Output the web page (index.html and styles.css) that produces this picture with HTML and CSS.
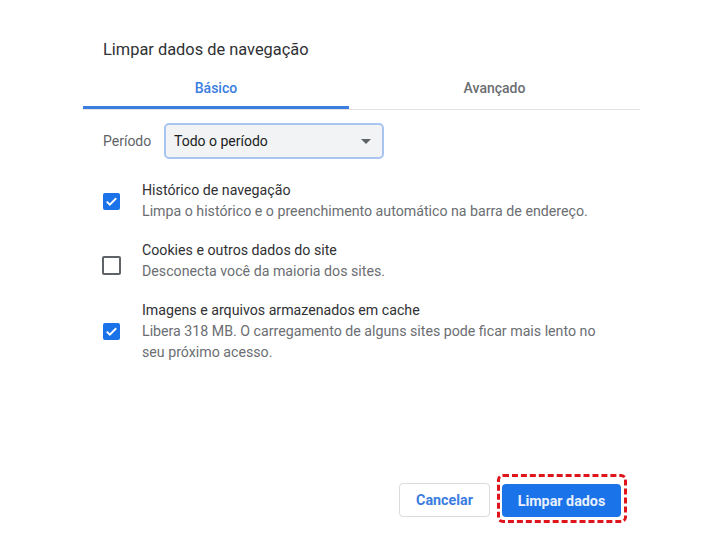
FILE: index.html
```html
<!DOCTYPE html>
<html lang="pt">
<head>
    <meta charset="UTF-8">
    <meta name="viewport" content="width=device-width, initial-scale=1.0">
    <title>Limpar dados de navegação</title>
    <link rel="stylesheet" href="styles.css">
</head>
<body>
    <div class="dialog">
        <h1 class="dialog-title">Limpar dados de navegação</h1>

        <div class="tabs">
            <div class="tab active">Básico</div>
            <div class="tab tab-wide">Avançado</div>
        </div>

        <div class="period-row">
            <span class="period-label">Período</span>
            <div class="select">
                <span>Todo o período</span>
                <span class="select-arrow"></span>
            </div>
        </div>

        <div class="items">
            <div class="item">
                <div class="check-col"><span class="checkbox checked">
                    <svg viewBox="0 0 18 18" width="17" height="17"><path d="M4 9.2l3.2 3.2L14 5.6" fill="none" stroke="#fff" stroke-width="2"/></svg>
                </span></div>
                <div class="item-text">
                    <div class="item-title">Histórico de navegação</div>
                    <div class="item-desc">Limpa o histórico e o preenchimento automático na barra de endereço.</div>
                </div>
            </div>

            <div class="item">
                <div class="check-col"><span class="checkbox unchecked"></span></div>
                <div class="item-text">
                    <div class="item-title">Cookies e outros dados do site</div>
                    <div class="item-desc">Desconecta você da maioria dos sites.</div>
                </div>
            </div>

            <div class="item">
                <div class="check-col"><span class="checkbox checked">
                    <svg viewBox="0 0 18 18" width="17" height="17"><path d="M4 9.2l3.2 3.2L14 5.6" fill="none" stroke="#fff" stroke-width="2"/></svg>
                </span></div>
                <div class="item-text">
                    <div class="item-title">Imagens e arquivos armazenados em cache</div>
                    <div class="item-desc">Libera 318 MB. O carregamento de alguns sites pode ficar mais lento no<br>seu próximo acesso.</div>
                </div>
            </div>
        </div>

        <div class="footer">
            <button class="btn btn-cancel">Cancelar</button>
            <span class="highlight">
                <button class="btn btn-primary">Limpar dados</button>
            </span>
        </div>
    </div>
</body>
</html>
```

FILE: styles.css
```css
* {
    margin: 0;
    padding: 0;
    box-sizing: border-box;
}

body {
    font-family: Roboto, 'Liberation Sans', sans-serif;
    background: #fff;
    color: #202124;
    width: 710px;
    height: 553px;
    overflow: hidden;
}

.dialog {
    margin-left: 83px;
    width: 557px;
    padding-top: 40px;
}

.dialog-title {
    font-size: 16.4px;
    font-weight: 400;
    line-height: 20px;
    color: #303134;
    padding-left: 20px;
}

.tabs {
    display: flex;
    margin-top: 9px;
    border-bottom: 1px solid #e3e3e3;
}

.tab {
    width: 266px;
    text-align: center;
    font-size: 14px;
    font-weight: 500;
    line-height: 20px;
    padding: 9px 0 8px;
    color: #6b6e72;
    border-bottom: 3px solid transparent;
}

.tab-wide {
    width: 291px;
}

.tab.active {
    color: #3b7de0;
    border-bottom-color: #3b7de0;
}

.period-row {
    display: flex;
    align-items: center;
    margin-top: 13px;
    padding-left: 20px;
}

.period-label {
    font-size: 14px;
    color: #5f6368;
    width: 61px;
}

.select {
    width: 220px;
    height: 36px;
    display: flex;
    align-items: center;
    justify-content: space-between;
    padding: 0 11px 0 8px;
    background: #f1f3f4;
    border: 2px solid #a8c4f0;
    border-radius: 5px;
    font-size: 14px;
    color: #202124;
}

.select-arrow {
    width: 0;
    height: 0;
    border-left: 5px solid transparent;
    border-right: 5px solid transparent;
    border-top: 5px solid #5f6368;
}

.items {
    display: flex;
    flex-direction: column;
    gap: 18px;
    margin-top: 21px;
    padding-left: 20px;
}

.item {
    display: flex;
    align-items: center;
}

.check-col {
    width: 39px;
    display: flex;
}

.checkbox {
    width: 17px;
    height: 17px;
    border-radius: 2px;
    display: flex;
    align-items: center;
    justify-content: center;
}

.checkbox.checked {
    background: #1a73e8;
}

.checkbox.unchecked {
    width: 19px;
    height: 19px;
    border: 2.5px solid #5f6368;
    margin-top: 8px;
    margin-left: -1px;
}

.item-text {
    font-size: 14.2px;
    line-height: 21px;
}

.item-title {
    color: #303134;
}

.item-desc {
    color: #6b6e72;
}

.footer {
    display: flex;
    justify-content: flex-end;
    align-items: center;
    gap: 7px;
    margin-top: 111px;
    padding-right: 13px;
}

.btn {
    font-family: Roboto, 'Liberation Sans', sans-serif;
    font-size: 14.3px;
    font-weight: 700;
    border-radius: 4px;
    height: 34px;
}

.btn-cancel {
    width: 91px;
    margin-top: 3px;
    background: #fff;
    border: 1px solid #dadce0;
    color: #3b7de0;
}

.highlight {
    display: flex;
    padding: 7px 3px 3px 2px;
    border: 3px dashed #e0141b;
    border-radius: 6px;
}

.btn-primary {
    width: 119px;
    height: 33px;
    background: #1a73e8;
    border: none;
    color: #e8f0fe;
}
```
